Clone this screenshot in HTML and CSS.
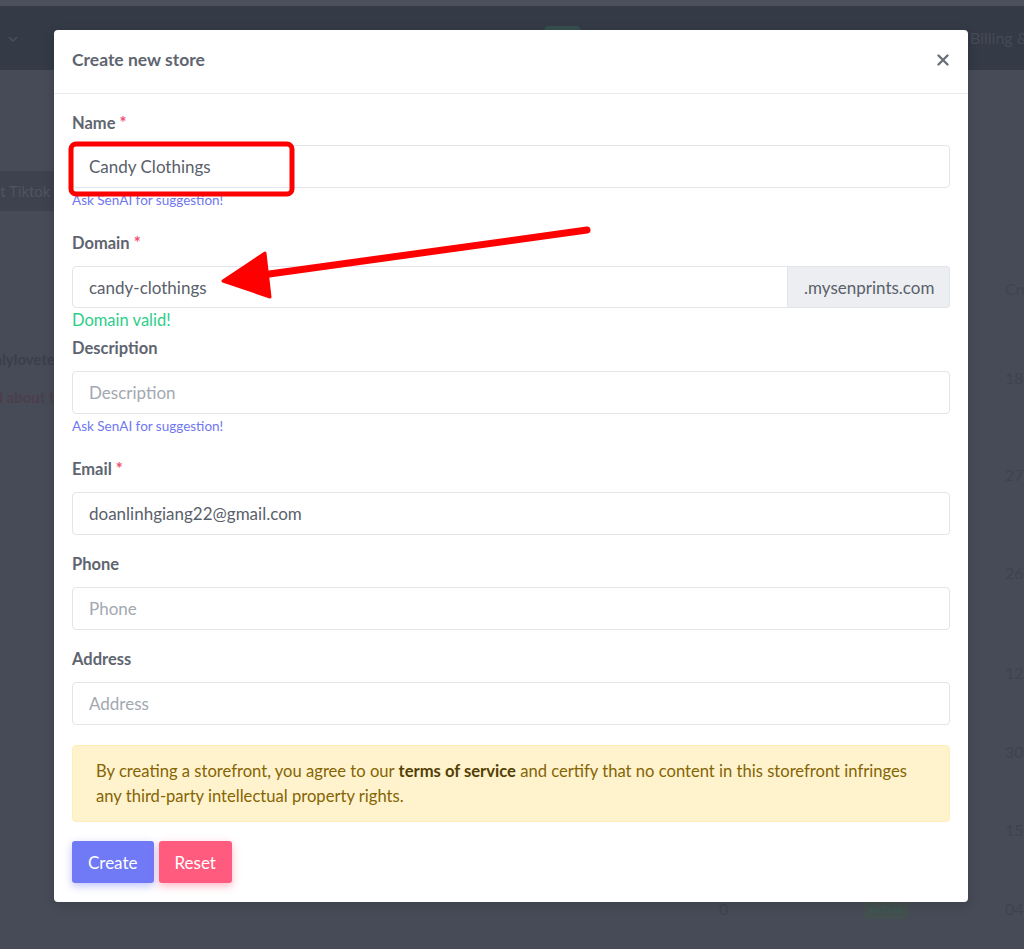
FILE: index.html
```html
<!DOCTYPE html>
<html lang="en">
<head>
    <meta charset="UTF-8">
    <meta name="viewport" content="width=device-width, initial-scale=1.0">
    <title>Create new store</title>
    <link rel="stylesheet" href="styles.css">
</head>
<body>
    <!-- page behind the modal (already dimmed) -->
    <div class="page">
        <div class="topline"></div>
        <div class="navbar">
            <svg class="nav-chevron" width="10" height="6" viewBox="0 0 10 6"><path d="M1 1 L5 5 L9 1" fill="none" stroke="#4b515d" stroke-width="1.4"/></svg>
            <span class="nav-badge"></span>
            <span class="nav-link">Billing &amp;</span>
        </div>
        <div class="content">
            <div class="toolbar">
                <span class="tool-btn">Connect Tiktok</span>
            </div>
            <div class="table">
                <div class="row row-head"><span class="cell-right">Created</span></div>
                <div class="row row-a">
                    <div class="cell-left">
                        <span class="store-name">onlylovetees</span>
                        <span class="store-desc">All about tees</span>
                    </div>
                    <span class="cell-right">18</span>
                </div>
                <div class="row row-b"><span class="cell-right">27</span></div>
                <div class="row row-c"><span class="cell-right">26</span></div>
                <div class="row row-d"><span class="cell-right">12</span></div>
                <div class="row row-e"><span class="cell-right">30</span></div>
                <div class="row row-f"><span class="cell-right">15</span></div>
                <div class="row row-g">
                    <span class="cell-count">0</span>
                    <span class="cell-status">Active</span>
                    <span class="cell-right">04</span>
                </div>
            </div>
        </div>
    </div>

    <div class="modal">
        <div class="modal-header">
            <h5 class="modal-title">Create new store</h5>
            <button class="close" aria-label="Close">
                <svg width="12" height="12" viewBox="0 0 12 12"><path d="M1.5 1.5 L10.5 10.5 M10.5 1.5 L1.5 10.5" stroke="#6b7079" stroke-width="2.4" stroke-linecap="round"/></svg>
            </button>
        </div>
        <div class="modal-body">
            <div class="form-group">
                <label>Name <span class="req">*</span></label>
                <input type="text" class="form-control" value="Candy Clothings">
                <small class="hint">Ask SenAI for suggestion!</small>
            </div>

            <div class="form-group domain-group">
                <label>Domain <span class="req">*</span></label>
                <div class="input-group">
                    <input type="text" class="form-control" value="candy-clothings">
                    <span class="addon">.mysenprints.com</span>
                </div>
                <div class="valid">Domain valid!</div>
            </div>

            <div class="form-group">
                <label>Description</label>
                <input type="text" class="form-control" placeholder="Description">
                <small class="hint">Ask SenAI for suggestion!</small>
            </div>

            <div class="form-group">
                <label>Email <span class="req">*</span></label>
                <input type="text" class="form-control" value="doanlinhgiang22@gmail.com">
            </div>

            <div class="form-group">
                <label>Phone</label>
                <input type="text" class="form-control" placeholder="Phone">
            </div>

            <div class="form-group">
                <label>Address</label>
                <input type="text" class="form-control" placeholder="Address">
            </div>

            <div class="alert">
                By creating a storefront, you agree to our <b>terms of service</b> and certify that no content in this storefront infringes any third-party intellectual property rights.
            </div>

            <div class="actions">
                <button class="btn btn-create">Create</button>
                <button class="btn btn-reset">Reset</button>
            </div>
        </div>
    </div>

    <!-- red annotations drawn over the screenshot -->
    <svg class="marks" width="1024" height="949" viewBox="0 0 1024 949">
        <rect x="71" y="144" width="221" height="50" rx="5" fill="none" stroke="#ff0000" stroke-width="5"/>
        <line x1="587" y1="230" x2="262" y2="275" stroke="#ff0000" stroke-width="7" stroke-linecap="round"/>
        <polygon points="223,281 265,253 270,297" fill="#ff0000" stroke="#ff0000" stroke-width="3" stroke-linejoin="round"/>
    </svg>
</body>
</html>
```

FILE: styles.css
```css
html, body {
    margin: 0;
    padding: 0;
}
body {
    font-family: Lato, "Noto Sans", sans-serif;
    background: #464b57;
    width: 1024px;
    height: 949px;
    overflow: hidden;
}

/* dimmed page */
.page {
    color: #3c414d;
}
.topline {
    height: 6px;
    background: #4b505c;
}
.navbar {
    height: 64px;
    background: #343a46;
    position: relative;
}
.nav-chevron {
    position: absolute;
    left: 8px;
    top: 30px;
}
.nav-badge {
    position: absolute;
    left: 544px;
    top: 20px;
    width: 37px;
    height: 20px;
    border-radius: 5px;
    background: #36504f;
}
.nav-link {
    position: absolute;
    left: 970px;
    top: 22px;
    font-size: 16px;
    color: #444a57;
    white-space: nowrap;
}
.content {
    padding-top: 99px;
}
.toolbar {
    height: 43px;
    display: flex;
    align-items: center;
}
.tool-btn {
    background: #3d424e;
    height: 40px;
    line-height: 40px;
    padding: 0 16px;
    margin-left: -66px;
    font-size: 15px;
    color: #4f5461;
    white-space: nowrap;
}
.table {
    margin-top: 57px;
}
.row {
    position: relative;
    display: flex;
    align-items: flex-start;
    box-sizing: border-box;
    padding-top: 10px;
    font-size: 16px;
    line-height: 20px;
}
.row-head {
    height: 89px;
}
.row-a { height: 97px; }
.row-b { height: 98px; }
.row-c { height: 100px; }
.row-d { height: 79px; }
.row-e { height: 78px; }
.row-f { height: 79px; }
.row-g { height: 60px; }
.cell-left {
    display: flex;
    flex-direction: column;
    gap: 18px;
    margin-left: -15px;
    margin-top: -19px;
    font-weight: 700;
    font-size: 15px;
}
.store-name { color: #3b3f4b; }
.store-desc { color: #4b3f4c; }
.cell-right {
    position: absolute;
    left: 1005px;
    color: #3e434f;
    white-space: nowrap;
}
.cell-count {
    position: absolute;
    left: 719px;
    color: #3e434f;
}
.cell-status {
    position: absolute;
    left: 864px;
    padding: 0 5px;
    font-size: 12px;
    font-weight: 700;
    border-radius: 4px;
    background: #44504f;
    color: #3d5853;
}

/* modal */
.modal {
    position: absolute;
    left: 54px;
    top: 30px;
    width: 914px;
    background: #fff;
    border-radius: 4px;
    box-shadow: 0 3px 12px rgba(0, 0, 0, 0.15);
}
.modal-header {
    box-sizing: border-box;
    height: 64px;
    padding: 0 18px 4px;
    display: flex;
    align-items: center;
    justify-content: space-between;
    border-bottom: 1px solid #e9ebee;
}
.modal-title {
    margin: 0;
    font-size: 17.5px;
    font-weight: 700;
    color: #5f6570;
}
.close {
    border: none;
    background: none;
    padding: 0;
    margin-right: 1px;
    display: flex;
    cursor: pointer;
}
.modal-body {
    padding: 17px 18px 19px;
}
.form-group {
    margin-bottom: 17px;
}
label {
    display: block;
    font-size: 16.5px;
    line-height: 24px;
    font-weight: 700;
    color: #5f6570;
    margin-bottom: 10px;
}
.form-group:nth-child(n+2) label {
    margin-bottom: 11px;
}
.req {
    color: #f0506e;
}
.form-control {
    display: block;
    box-sizing: border-box;
    width: 100%;
    height: 43px;
    padding: 0 16px;
    border: 1px solid #e2e5e9;
    border-radius: 4px;
    font-family: inherit;
    font-size: 17px;
    color: #5a606b;
    background: #fff;
    outline: none;
}
.form-control::placeholder {
    color: #a3a8b0;
}
.hint {
    display: block;
    margin-top: 3px;
    padding-bottom: 5px;
    font-size: 13.5px;
    line-height: 18px;
    color: #7077f0;
}
.input-group {
    display: flex;
}
.input-group .form-control {
    flex: 1;
    height: 42px;
    border-radius: 4px 0 0 4px;
}
.addon {
    display: flex;
    align-items: center;
    box-sizing: border-box;
    height: 42px;
    width: 162px;
    padding: 0 16px;
    background: #eceef1;
    border: 1px solid #e2e5e9;
    border-left: none;
    border-radius: 0 4px 4px 0;
    font-size: 17px;
    color: #5a606b;
    white-space: nowrap;
}
.domain-group {
    margin-bottom: 5px;
}
.valid {
    margin-top: 1px;
    font-size: 16.5px;
    line-height: 22px;
    color: #2dce89;
}
.alert {
    margin-top: 20px;
    padding: 13px 23px 12px;
    background: #fff3cd;
    border: 1px solid #ffeeba;
    border-radius: 4px;
    font-size: 16.6px;
    line-height: 25px;
    color: #856404;
}
.alert b {
    color: #533f03;
}
.actions {
    margin-top: 19px;
    display: flex;
    gap: 5px;
}
.btn {
    height: 42px;
    padding: 0 16px;
    border: none;
    border-radius: 3px;
    font-family: inherit;
    font-size: 17px;
    color: #fff;
    cursor: pointer;
}
.btn-create {
    background: #7079f6;
    box-shadow: 0 3px 8px rgba(112, 121, 246, 0.45);
}
.btn-reset {
    background: #ff5b7e;
    box-shadow: 0 3px 8px rgba(255, 91, 126, 0.45);
}

.marks {
    position: absolute;
    left: 0;
    top: 0;
    pointer-events: none;
}
```
